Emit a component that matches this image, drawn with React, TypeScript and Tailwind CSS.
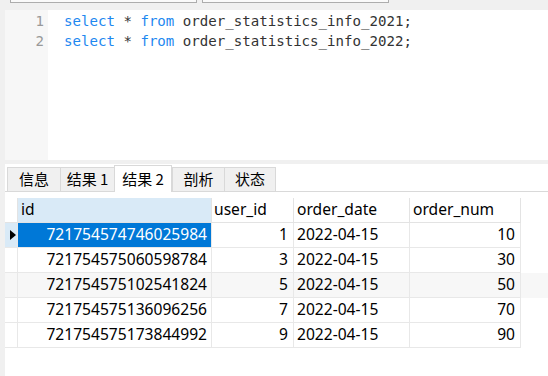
const rows = [
  { id: '721754574746025984', user: '1', date: '2022-04-15', num: '10' },
  { id: '721754575060598784', user: '3', date: '2022-04-15', num: '30' },
  { id: '721754575102541824', user: '5', date: '2022-04-15', num: '50' },
  { id: '721754575136096256', user: '7', date: '2022-04-15', num: '70' },
  { id: '721754575173844992', user: '9', date: '2022-04-15', num: '90' },
];

const tabs = [
  { label: '信息', w: 'w-[53px]' },
  { label: '结果 1', w: 'w-[54px]' },
  { label: '结果 2', w: 'w-[58px]', active: true },
  { label: '剖析', w: 'w-[52px]' },
  { label: '状态', w: 'w-[52px]' },
];

function Kw({ children }: { children: string }) {
  return <span className="text-[#1e88f0]">{children}</span>;
}

export default function App() {
  return (
    <div className="w-[548px] h-[376px] bg-[#f0f0f0] overflow-hidden flex flex-col">
      {/* toolbar remnants */}
      <div className="h-[10px] flex gap-[5px] pl-[10px]">
        <div className="w-[187px] h-[3px] border-x border-b border-[#adadad] bg-[#fafafa]" />
        <div className="w-[187px] h-[3px] border-x border-b border-[#adadad] bg-[#fafafa]" />
      </div>

      {/* sql editor */}
      <div className="h-[150px] ml-[5px] bg-white flex font-['DejaVu_Sans_Mono',monospace] text-[14.1px] leading-[20px]">
        <div className="w-[43px] bg-[#f7f7f7] pt-[1px] pr-[4px] text-right text-[#999999]">
          <div>1</div>
          <div>2</div>
        </div>
        <div className="pl-[16px] pt-[1px] text-[#333333] whitespace-pre">
          <div>
            <Kw>select</Kw> * <Kw>from</Kw> order_statistics_info_2021;
          </div>
          <div>
            <Kw>select</Kw> * <Kw>from</Kw> order_statistics_info_2022;
          </div>
        </div>
      </div>

      <div className="h-[4px]" />

      {/* result pane */}
      <div className="flex-1 ml-[5px] bg-white flex flex-col font-['Noto_Sans','Noto_Sans_CJK_SC',sans-serif] text-black">
        <div className="h-[28px] flex items-end pl-[2px] border-b border-[#d9d9d9] font-['Noto_Sans_CJK_SC',sans-serif] text-[15px]">
          {tabs.map((t) =>
            t.active ? (
              <div
                key={t.label}
                className={`${t.w} h-[27px] -mb-px bg-white border-x border-t border-[#d9d9d9] flex items-center justify-center`}
              >
                {t.label}
              </div>
            ) : (
              <div
                key={t.label}
                className={`${t.w} h-[24px] bg-[#f0f0f0] border-l border-t border-[#d9d9d9] last:border-r flex items-center justify-center`}
              >
                {t.label}
              </div>
            )
          )}
        </div>

        <div className="mt-[6px] text-[15.6px]">
          <div className="flex h-[25px]">
            <div className="w-[13px] border-r border-b border-[#e3e3e3]" />
            <div className="w-[194px] bg-[#d9eaf7] border-r border-b border-[#e3e3e3] pl-[3px] flex items-center">id</div>
            <div className="w-[82px] border-r border-b border-[#e3e3e3] pl-[2px] flex items-center">user_id</div>
            <div className="w-[116px] border-r border-b border-[#e3e3e3] pl-[3px] flex items-center">order_date</div>
            <div className="w-[111px] border-r border-b border-[#e3e3e3] pl-[3px] flex items-center">order_num</div>
          </div>
          {rows.map((r, i) => {
            const sel = i === 0;
            const bg = i === 2 ? 'bg-[#f7f7f7]' : 'bg-white';
            return (
              <div key={r.id} className={`flex h-[25px] ${bg}`}>
                <div
                  className={`w-[13px] border-r border-b border-[#e8e8e8] flex items-center pl-[5px] ${
                    sel ? 'bg-[#d9eaf7]' : ''
                  }`}
                >
                  {sel && (
                    <svg width="6" height="10" viewBox="0 0 6 10">
                      <polygon points="0,0 6,5 0,10" fill="#000" />
                    </svg>
                  )}
                </div>
                <div
                  className={`w-[194px] border-r border-b border-[#e8e8e8] pr-[4px] flex items-center justify-end ${
                    sel ? 'bg-[#0078d7] text-white' : ''
                  }`}
                >
                  {r.id}
                </div>
                <div className="w-[82px] border-r border-b border-[#e8e8e8] pr-[5px] flex items-center justify-end">
                  {r.user}
                </div>
                <div className="w-[116px] border-r border-b border-[#e8e8e8] pl-[3px] flex items-center">{r.date}</div>
                <div className="w-[111px] border-r border-b border-[#e8e8e8] pr-[5px] flex items-center justify-end">
                  {r.num}
                </div>
              </div>
            );
          })}
        </div>
      </div>
    </div>
  );
}
